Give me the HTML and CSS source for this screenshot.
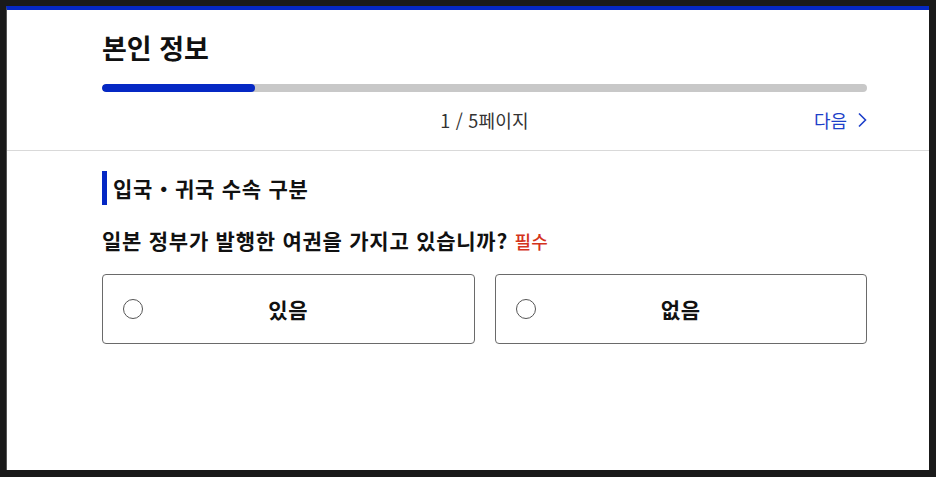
FILE: index.html
```html
<!DOCTYPE html>
<html lang="ko">
<head>
<meta charset="utf-8">
<title>본인 정보</title>
<link rel="stylesheet" href="styles.css">
</head>
<body>
<div class="frame">
  <header class="header">
    <div class="inner">
      <h1 class="title">본인 정보</h1>
      <div class="progress"><div class="progress-fill" style="width: 20%"></div></div>
      <div class="nav">
        <span class="nav-side"></span>
        <span class="page-count">1 / 5페이지</span>
        <a class="next" href="#">다음
          <svg class="chev" width="10" height="16" viewBox="0 0 10 16"><polyline points="2,1.5 8.5,8 2,14.5" fill="none" stroke="#1d3fc9" stroke-width="1.6"/></svg>
        </a>
      </div>
    </div>
  </header>
  <main class="inner">
    <h2 class="section-title">입국・귀국 수속 구분</h2>
    <p class="question">일본 정부가 발행한 여권을 가지고 있습니까? <span class="required">필수</span></p>
    <div class="options">
      <label class="option"><span class="radio"></span><span class="option-label">있음</span><span></span></label>
      <label class="option"><span class="radio"></span><span class="option-label">없음</span><span></span></label>
    </div>
  </main>
</div>
</body>
</html>
```

FILE: styles.css
```css
html, body {
  margin: 0;
  padding: 0;
}
body {
  background: #1a1a1a;
  font-family: "Noto Sans CJK KR", "Noto Sans", sans-serif;
  color: #111;
  padding: 6px 7px 7px 6px;
  box-sizing: border-box;
  height: 477px;
}
.frame {
  background: #fff;
  border-top: 4px solid #0528c4;
  border-left: 1px solid #555;
  height: 460px;
  box-sizing: content-box;
}
.inner {
  padding: 0 62px 0 95px;
}
.header {
  border-bottom: 1px solid #d9d9d9;
  padding-top: 20px;
  padding-bottom: 19px;
}
.title {
  margin: 0;
  font-size: 27px;
  font-weight: 700;
  line-height: 36px;
  color: #111;
}
.progress {
  margin-top: 18px;
  height: 8px;
  border-radius: 4px;
  background: #c8c8c8;
  overflow: hidden;
}
.progress-fill {
  height: 100%;
  background: #0528c4;
  border-radius: 4px;
}
.nav {
  margin-top: 15px;
  display: grid;
  grid-template-columns: 1fr auto 1fr;
  align-items: center;
  height: 24px;
}
.page-count {
  font-size: 18px;
  letter-spacing: 0.2px;
  color: #333;
}
.next {
  justify-self: end;
  display: flex;
  align-items: center;
  gap: 10px;
  color: #1d3fc9;
  font-size: 18px;
  text-decoration: none;
}
.section-title {
  margin: 20px 0 0;
  border-left: 5px solid #0528c4;
  padding-left: 6px;
  height: 34px;
  line-height: 34px;
  font-size: 21px;
  letter-spacing: 0.75px;
  font-weight: 700;
}
.question {
  margin: 21px 0 0;
  font-size: 21px;
  letter-spacing: 0.75px;
  font-weight: 700;
  line-height: 28px;
}
.required {
  color: #d4331c;
  font-size: 18px;
  letter-spacing: 0;
  font-weight: 500;
}
.options {
  margin-top: 19px;
  display: grid;
  grid-template-columns: 1fr 1fr;
  gap: 20px;
}
.option {
  height: 70px;
  box-sizing: border-box;
  border: 1px solid #6a6a6a;
  border-radius: 4px;
  display: grid;
  grid-template-columns: 1fr auto 1fr;
  align-items: center;
  padding: 0 20px;
}
.radio {
  width: 20px;
  height: 20px;
  box-sizing: border-box;
  border: 1px solid #555;
  border-radius: 50%;
}
.option-label {
  font-size: 21px;
  letter-spacing: 0.8px;
  font-weight: 700;
}
```
